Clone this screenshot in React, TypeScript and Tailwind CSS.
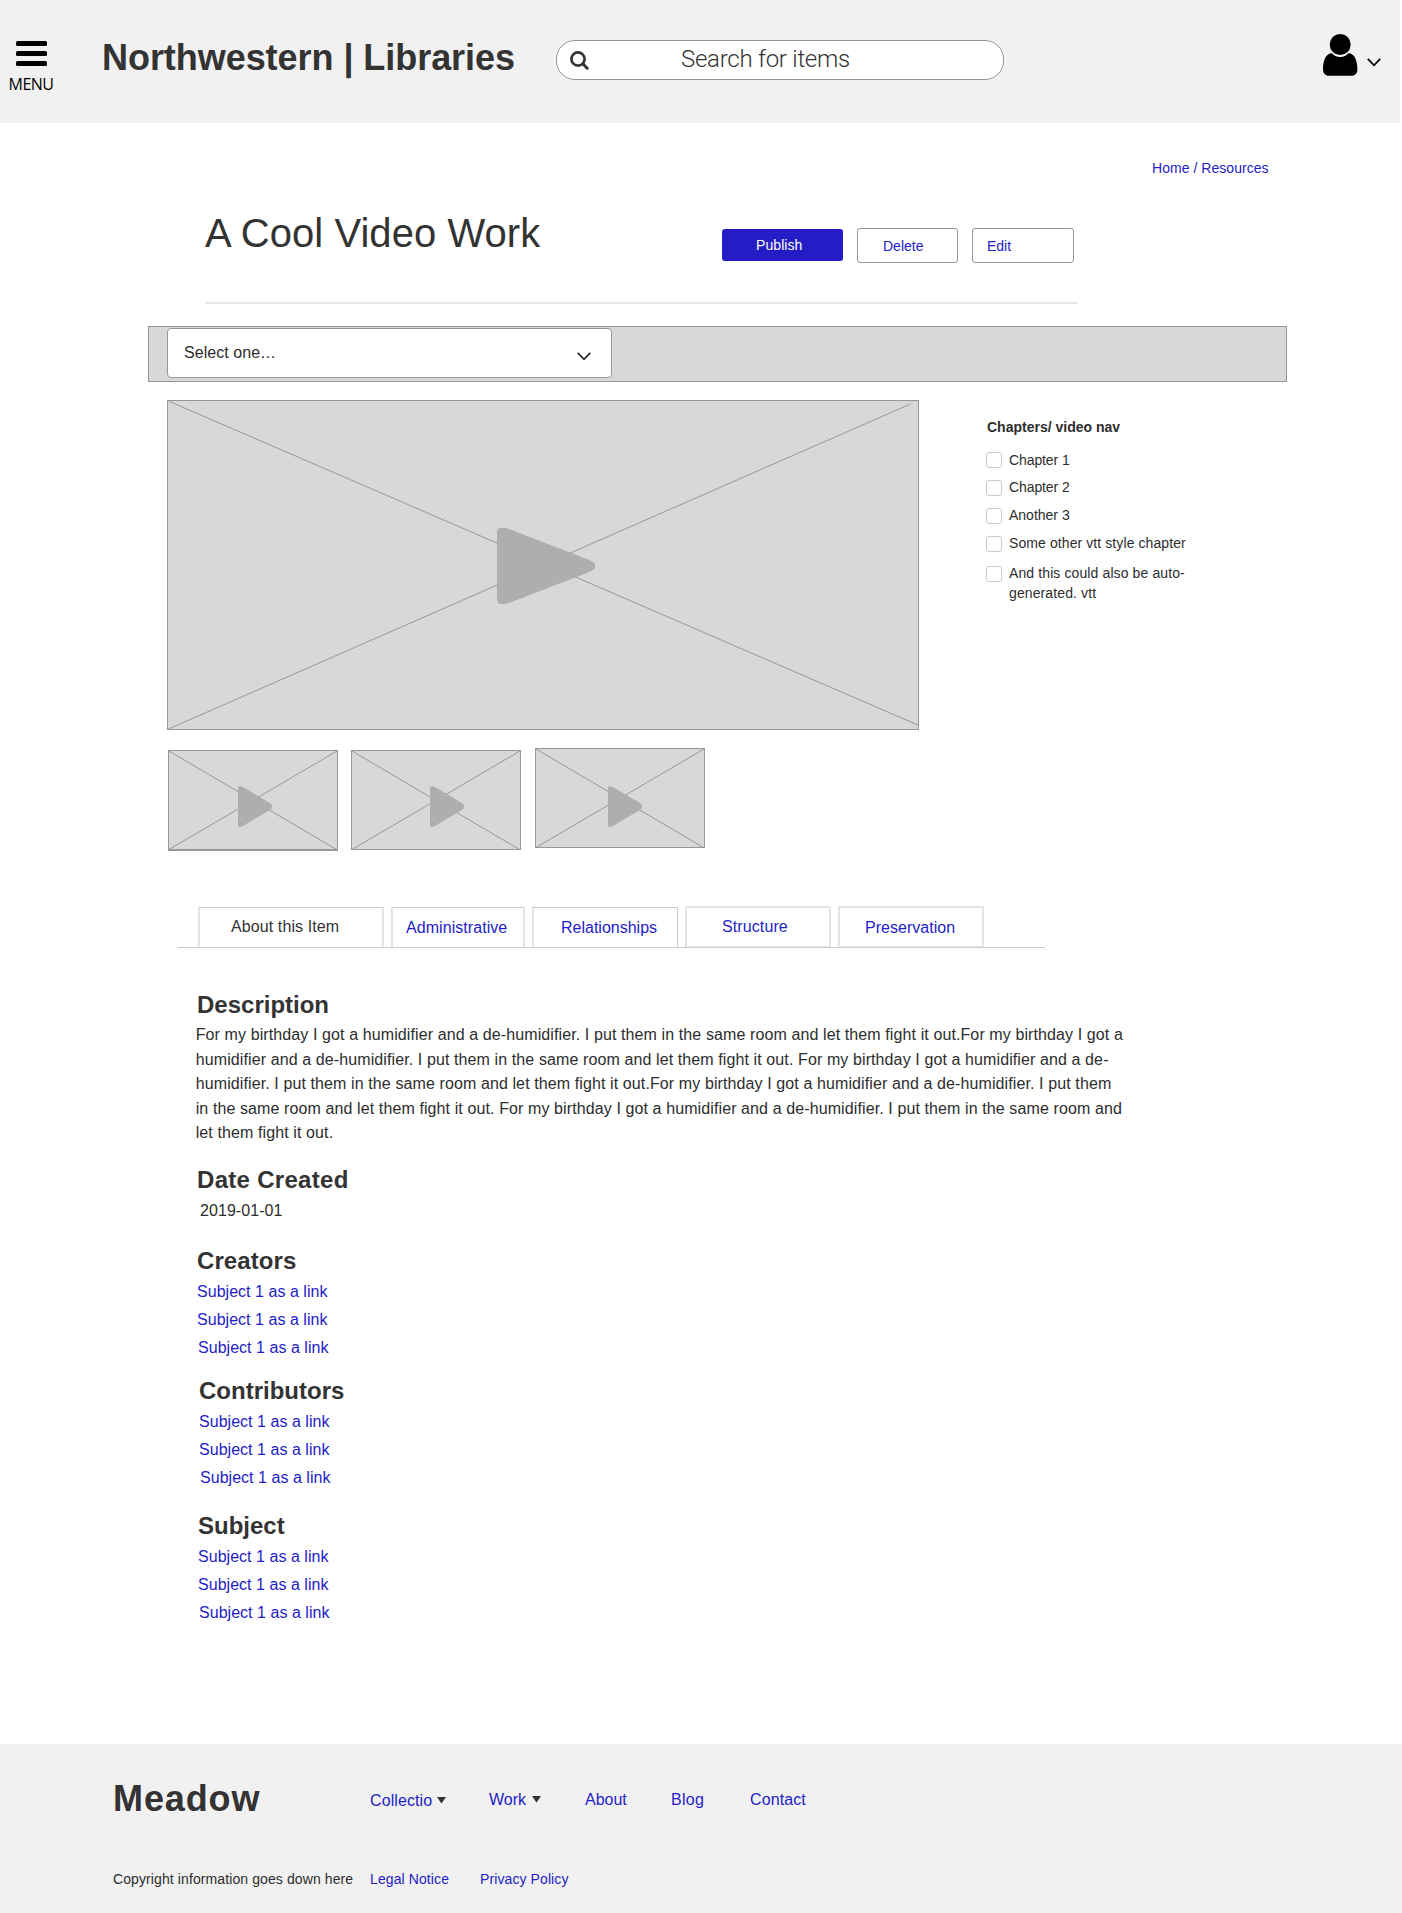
import React from "react";

function ChevronDown({ className = "" }: { className?: string }) {
  return (
    <svg viewBox="0 0 14 9" className={"h-[9px] w-[14px] " + className} fill="none" stroke="currentColor" strokeWidth="1.8">
      <path d="M0.8 0.9 L7 7.3 L13.2 0.9" />
    </svg>
  );
}

function Caret() {
  return (
    <svg viewBox="0 0 9 7" className="h-[7px] w-[9px] fill-[#333]">
      <path d="M0 0H9L4.5 6.5Z" />
    </svg>
  );
}

function Header() {
  return (
    <header className="flex h-[123px] w-[1400px] items-start bg-[#f1f1f1]">
      <button className="mt-[41px] ml-[8px] flex w-[46px] flex-col items-center text-black">
        <span className="flex flex-col gap-[5px]">
          <span className="h-[5px] w-[31px] rounded-[1.5px] bg-black" />
          <span className="h-[5px] w-[31px] rounded-[1.5px] bg-black" />
          <span className="h-[5px] w-[31px] rounded-[1.5px] bg-black" />
        </span>
        <span className="mt-[8px] font-['Open_Sans',sans-serif] text-[16px] leading-[20px] tracking-[-0.5px]">MENU</span>
      </button>
      <h1 className="mt-[37px] ml-[48px] w-[454px] text-[36px] leading-[41px] font-bold tracking-[-0.05px] whitespace-nowrap text-[#333]">
        Northwestern | Libraries
      </h1>
      <div className="mt-[40px] flex h-[40px] w-[448px] items-start rounded-[19px] border border-[#979797] bg-white">
        <svg viewBox="0 0 19 19" className="mt-[10px] ml-[13px] h-[19px] w-[19px] text-[#333]" fill="none" stroke="currentColor">
          <circle cx="8" cy="8" r="6.6" strokeWidth="2.7" />
          <path d="M13 13L17.2 17.2" strokeWidth="3" strokeLinecap="round" />
        </svg>
        <span className="mt-[4px] ml-[92px] font-[Roboto,sans-serif] text-[24px] leading-[28px] font-light tracking-[-0.26px] text-[#333]">
          Search for items
        </span>
      </div>
      <div className="ml-[319px] flex items-start text-black">
        <svg viewBox="0 0 35 42" className="mt-[34px] h-[42px] w-[35px]">
          <path
            fill="currentColor"
            d="M9 19.2C10.6 21.4 13.8 22.9 17.2 22.9C20.6 22.9 23.8 21.4 25.4 19.2C30.5 18.8 34.4 25.2 34.4 35.2C34.4 39.2 32.2 41.7 28.6 41.7H5.9C2.2 41.7 0 39.2 0 35.2C0 25.2 3.9 18.8 9 19.2Z"
          />
          <circle cx="17.2" cy="10.5" r="10.5" fill="currentColor" />
        </svg>
        <ChevronDown className="mt-[58px] ml-[9px]" />
      </div>
    </header>
  );
}

function TitleRow() {
  return (
    <>
      <nav className="mt-[37px] ml-[1152px] flex h-[16px] text-[14px] leading-[16px] tracking-[0.04px] whitespace-pre text-[#241dc6]">
        <a>Home</a>
        <span> / </span>
        <a>Resources</a>
      </nav>
      <div className="mt-[35px] ml-[205px] flex h-[93px] w-[872px] items-start border-b-2 border-[#e7e7e7] text-[14px] leading-[16px]">
        <h2 className="w-[517px] text-[40px] leading-[44px] tracking-[0.06px] text-[#333]">A Cool Video Work</h2>
        <button className="mt-[18px] h-[32px] w-[121px] rounded-[3px] bg-[#241dc6] pt-[8px] pb-[8px] pl-[34px] text-left tracking-[0.08px] text-white">Publish</button>
        <button className="mt-[17px] ml-[14px] h-[35px] w-[101px] rounded-[3px] border border-[#979797] bg-white pt-[9px] pb-[8px] pl-[25px] text-left text-[#241dc6]">Delete</button>
        <button className="mt-[17px] ml-[14px] h-[35px] w-[102px] rounded-[3px] border border-[#979797] bg-white pt-[9px] pb-[8px] pl-[14px] text-left text-[#241dc6]">Edit</button>
      </div>
    </>
  );
}

function Toolbar() {
  return (
    <div className="mt-[22px] ml-[148px] flex h-[56px] w-[1139px] items-start border border-[#979797] bg-[#d8d8d8] pt-px pl-[18px]">
      <div className="flex h-[50px] w-[445px] items-start rounded-[4px] border border-[#979797] bg-white text-[#2d2d2d]">
        <span className="mt-[15px] ml-[16px] w-[393px] text-[16px] leading-[17px] tracking-[0.05px]">Select one…</span>
        <ChevronDown className="mt-[23px]" />
      </div>
    </div>
  );
}

function MainVideo() {
  return (
    <svg viewBox="0 0 752 330" className="h-[330px] w-[752px]">
      <rect x="0.5" y="0.5" width="751" height="329" fill="#d8d8d8" stroke="#979797" />
      <path d="M2.5 1.5L752 325.5M1.5 329L743.5 4" stroke="#979797" fill="none" />
      <path
        fill="#aeaeae"
        d="M330 133C330 129 332 127.8 336 127.8C338.5 127.8 340 128.2 342 129L423 160.3C430 163 430 169 423 171.7L342 203C340 203.7 338.5 204 336 204C332 204 330 202.8 330 199Z"
      />
    </svg>
  );
}

function Thumb({ playX, playY, last }: { playX: number; playY: number; last?: boolean }) {
  return (
    <svg viewBox="0 0 170 102" className="h-[102px] w-[170px]">
      <rect x="0.5" y="0.5" width="169" height="99" fill="#d8d8d8" stroke="#979797" />
      {last && <path d="M0 100H170" stroke="#979797" strokeWidth="2" />}
      <path d="M1 1L168.5 99.5M1 99.5L169 1" stroke="#979797" fill="none" />
      <path
        transform={`translate(${playX} ${playY})`}
        fill="#aeaeae"
        d="M0 2C0 0.2 1.8 -0.3 4 0.6L32 17C34.8 18.8 34.8 22.2 32 24L4 40.6C1.8 41.5 0 41 0 39Z"
      />
    </svg>
  );
}

const chapters = [
  { label: "Chapter 1", row: "mt-[17px]", text: "", track: "tracking-[-0.1px]" },
  { label: "Chapter 2", row: "mt-[12px]", text: "-mt-px", track: "tracking-[-0.1px]" },
  { label: "Another 3", row: "mt-[12px]", text: "-mt-px", track: "" },
  { label: "Some other vtt style chapter", row: "mt-[12px]", text: "-mt-px", track: "tracking-[0.09px]" },
  { label: "And this could also be auto-\ngenerated. vtt", row: "mt-[14px]", text: "-mt-[3px] leading-[20px]", track: "tracking-[0.11px]" },
];

function Chapters() {
  return (
    <aside className="mt-[19px] ml-[67px] text-[14px] leading-[16px] text-[#2d2d2d]">
      <h3 className="ml-px font-bold">Chapters/ video nav</h3>
      {chapters.map((c) => (
        <label key={c.label} className={"flex h-[16px] items-start " + c.row}>
          <span className="h-[16px] w-[16px] rounded-[3px] border border-[#ccc] bg-white" />
          <span className={"ml-[7px] whitespace-pre " + c.text + " " + c.track}>{c.label}</span>
        </label>
      ))}
    </aside>
  );
}

function Tabs() {
  const link = "text-[#241dc6] ";
  const base = "border-t border-t-[#ccc] border-x-[#e5e5e5] h-[40px] mt-px ";
  const boxed = "ml-[7px] h-[41px] w-[146px] border-2 border-b border-[#e5e5e5] ";
  return (
    <div className="mt-[55px] ml-[178px] flex h-[42px] w-[867px] items-start border-b border-[#ccc] pl-[20px] text-[16px] leading-[17px]">
      <div className={base + "w-[186px] border-x-2 pt-[10px] pl-[31px] tracking-[0.1px] text-[#333]"}>About this Item</div>
      <div className={base + link + "ml-[7px] w-[134px] border-x-2 pt-[11px] pl-[13px] tracking-[0.06px]"}>Administrative</div>
      <div className={base + link + "ml-[7px] w-[146px] border-r border-l-2 border-r-[#ccc] pt-[11px] pl-[27px]"}>Relationships</div>
      <div className={boxed + link + "pt-[10px] pl-[35px] tracking-[0.1px]"}>Structure</div>
      <div className={boxed + link + "pt-[11px] pl-[25px] tracking-[0.03px]"}>Preservation</div>
    </div>
  );
}

function Links({ className = "" }: { className?: string }) {
  return (
    <ul className={"mt-[9px] flex flex-col gap-[11px] text-[16px] leading-[17px] tracking-[0.03px] text-[#241dc6] " + className}>
      <li>Subject 1 as a link</li>
      <li>Subject 1 as a link</li>
      <li className="ml-px">Subject 1 as a link</li>
    </ul>
  );
}

const h = "text-[24px] leading-[27px] font-bold text-[#333] ";

function Details() {
  return (
    <main className="mt-[43px] ml-[195px]">
      <h3 className={h + "ml-[2px]"}>Description</h3>
      <p className="mt-[5px] ml-[0.7px] h-[122px] text-[16px] leading-[24.6px] tracking-[0.105px] whitespace-pre text-[#2d2d2d]">
        {"For my birthday I got a humidifier and a de-humidifier. I put them in the same room and let them fight it out.For my birthday I got a\n" +
          "humidifier and a de-humidifier. I put them in the same room and let them fight it out. For my birthday I got a humidifier and a de-\n" +
          "humidifier. I put them in the same room and let them fight it out.For my birthday I got a humidifier and a de-humidifier. I put them\n" +
          "in the same room and let them fight it out. For my birthday I got a humidifier and a de-humidifier. I put them in the same room and\n" +
          "let them fight it out."}
      </p>
      <h3 className={h + "mt-[21px] ml-[2px] tracking-[0.3px]"}>Date Created</h3>
      <p className="mt-[9px] ml-[5px] text-[16px] leading-[17px] tracking-[0.06px] text-[#2d2d2d]">2019-01-01</p>
      <h3 className={h + "mt-[28px] ml-[2px] tracking-[0.1px]"}>Creators</h3>
      <Links className="ml-[2px]" />
      <h3 className={h + "mt-[21px] ml-[4px]"}>Contributors</h3>
      <Links className="ml-[4px]" />
      <h3 className={h + "mt-[26px] ml-[3px]"}>Subject</h3>
      <Links className="ml-[3px]" />
    </main>
  );
}

function Footer() {
  return (
    <footer className="mt-[123px] h-[169px] bg-[#f1f1f1] pt-[34px] pl-[113px] text-[#241dc6]">
      <div className="flex h-[41px] items-start text-[16px] leading-[17px]">
        <div className="w-[257px] text-[36px] leading-[41px] font-bold tracking-[0.9px] text-[#333]">Meadow</div>
        <div className="mt-[14px] flex w-[119px] items-center gap-[5px] tracking-[0.1px]">
          Collectio <Caret />
        </div>
        <div className="mt-[13px] flex w-[96px] items-center gap-[6px]">
          Work <Caret />
        </div>
        <div className="mt-[13px] w-[86px]">About</div>
        <div className="mt-[13px] w-[79px] tracking-[0.3px]">Blog</div>
        <div className="mt-[13px] tracking-[0.1px]">Contact</div>
      </div>
      <div className="mt-[52px] flex text-[14px] leading-[16px] tracking-[0.1px]">
        <span className="w-[257px] text-[#2d2d2d]">Copyright information goes down here</span>
        <span className="w-[110px]">Legal Notice</span>
        <span>Privacy Policy</span>
      </div>
    </footer>
  );
}

export default function App() {
  return (
    <div className="flex h-[1913px] w-[1402px] flex-col bg-white font-['Liberation_Sans',Arial,sans-serif]">
      <Header />
      <TitleRow />
      <Toolbar />
      <div className="mt-[18px] ml-[167px] flex h-[330px] items-start">
        <MainVideo />
        <Chapters />
      </div>
      <div className="mt-[18px] ml-[168px] flex h-[103px] items-start">
        <div className="mt-[2px]"><Thumb playX={70} playY={36} last /></div>
        <div className="mt-[2px] ml-[13px]"><Thumb playX={79} playY={36} /></div>
        <div className="ml-[14px]"><Thumb playX={73} playY={38} /></div>
      </div>
      <Tabs />
      <Details />
      <Footer />
    </div>
  );
}
